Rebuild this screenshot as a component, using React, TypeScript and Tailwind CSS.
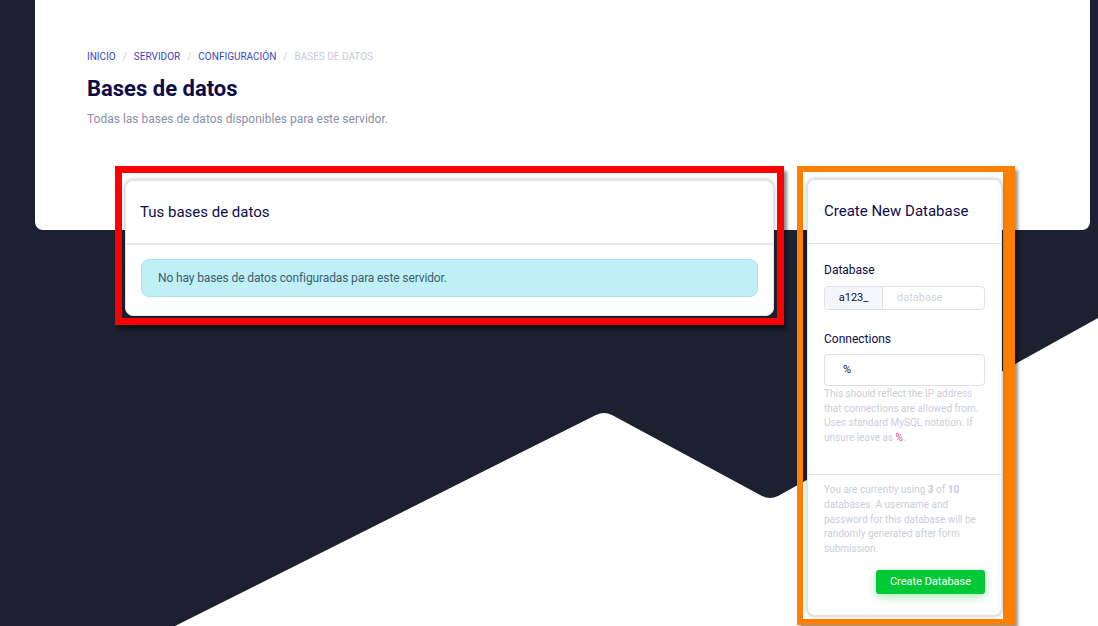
import React from 'react';

// Decorative zig-zag that sits behind the page content
function BackgroundShape() {
    return (
        <svg className="absolute inset-0 w-full h-full" viewBox="0 0 1098 626" preserveAspectRatio="none">
            <path
                d="M175 626 L596 415 Q604 411 612 415 L762 496 Q770 500 778 496 L1098 318 L1098 626 Z"
                fill="#ffffff"
            />
        </svg>
    );
}

function Breadcrumb() {
    const links = ['INICIO', 'SERVIDOR', 'CONFIGURACIÓN'];
    return (
        <nav className="flex items-center text-[10px] leading-3">
            {links.map(l => (
                <span key={l} className="flex items-center">
                    <span className="text-[#3a48b8]">{l}</span>
                    <span className="mx-[7px] text-[#c8ccdb]">/</span>
                </span>
            ))}
            <span className="text-[#c6cbdb]">BASES DE DATOS</span>
        </nav>
    );
}

function DatabasesCard() {
    return (
        <div className="w-[649px] bg-white rounded-lg border border-[#e2e4ec] shadow-[0_0_4px_rgba(0,0,0,0.3)]">
            <div className="h-[64px] flex items-center px-[14px] border-b-2 border-[#e4e6f0] text-[15px] text-[#0c0c4a]">
                Tus bases de datos
            </div>
            <div className="px-[15px] pt-[14px] pb-[18px]">
                <div className="h-[38px] flex items-center px-4 rounded-lg bg-[#bff0f5] border border-[#a3e4ec] text-[12px] tracking-[-0.01em] text-[#3e5f70]">
                    No hay bases de datos configuradas para este servidor.
                </div>
            </div>
        </div>
    );
}

function CreateDatabaseCard() {
    return (
        <div className="w-[195px] bg-white rounded-lg border border-[#e2e4ec] shadow-[0_0_4px_rgba(0,0,0,0.3)]">
            <div className="h-[64px] flex items-center px-4 border-b border-[#e1e3ec] text-[15px] text-[#0c0c4a]">
                Create New Database
            </div>
            <div className="px-4 pt-[18px] pb-[29px] border-b border-[#e1e3ec]">
                <label className="block text-[12px] leading-4 text-[#0c0c4a]">Database</label>
                <div className="mt-2 flex h-[24px] rounded border border-[#dfe1ea] text-[11px]">
                    <span className="w-[58px] flex items-center justify-center bg-[#f5f6fc] border-r border-[#dfe1ea] rounded-l text-[#0c0c4a]">
                        a123_
                    </span>
                    <span className="flex-1 flex items-center pl-[14px] text-[#cfd2de]">database</span>
                </div>
                <label className="mt-[21px] block text-[12px] leading-4 text-[#0c0c4a]">Connections</label>
                <div className="mt-[7px] h-[32px] flex items-center pl-[18px] rounded border border-[#dfe1ea] text-[11px] text-[#0c0c4a]">
                    %
                </div>
                <p className="mt-px text-[10px] leading-[14.5px] text-[#cbcdd9]">
                    This should reflect the IP address that connections are allowed from. Uses standard MySQL notation. If unsure leave as <span className="text-[#e83e8c]">%</span>.
                </p>
            </div>
            <div className="px-4 pt-[8px] pb-[21px]">
                <p className="text-[10px] leading-[14.8px] text-[#cbcdd9]">
                    You are currently using <strong className="font-bold">3</strong> of <strong className="font-bold">10</strong> databases. A username and password for this database will be randomly generated after form submission.
                </p>
                <div className="mt-[13px] flex justify-end">
                    <button className="w-[109px] h-[24px] rounded-[3px] bg-[#00c936] text-white text-[11px] shadow-[0_3px_8px_rgba(0,201,54,0.35)]">
                        Create Database
                    </button>
                </div>
            </div>
        </div>
    );
}

export default function App() {
    return (
        <div className="relative w-full h-[626px] overflow-hidden bg-[#1b2130] font-['Roboto',sans-serif]">
            <BackgroundShape />
            <div className="relative">
                <div className="ml-[35px] w-[1055px] h-[230px] bg-white rounded-b-lg pl-[52px] pt-[51px]">
                    <Breadcrumb />
                    <h1 className="mt-[12px] text-[22px] leading-[28px] font-bold text-[#0d0b47]">Bases de datos</h1>
                    <p className="mt-[8px] text-[12px] leading-4 text-[#8a8fa3]">
                        Todas las bases de datos disponibles para este servidor.
                    </p>
                </div>

                <div className="-mt-[64px] pl-[115px] flex items-start gap-[13px]">
                    {/* Red highlight */}
                    <div className="border-[7px] border-[#ff0000] pt-[7px] pl-[3px] pr-[3px] pb-[2px] shadow-[3px_5px_3px_rgba(0,0,0,0.45)]">
                        <DatabasesCard />
                    </div>
                    {/* Orange highlight */}
                    <div className="border-[6px] border-r-[12px] border-[#ff8000] pt-[7px] pl-[4px] pr-px pb-[3px] shadow-[3px_4px_3px_rgba(0,0,0,0.4)]">
                        <CreateDatabaseCard />
                    </div>
                </div>
            </div>
        </div>
    );
}
